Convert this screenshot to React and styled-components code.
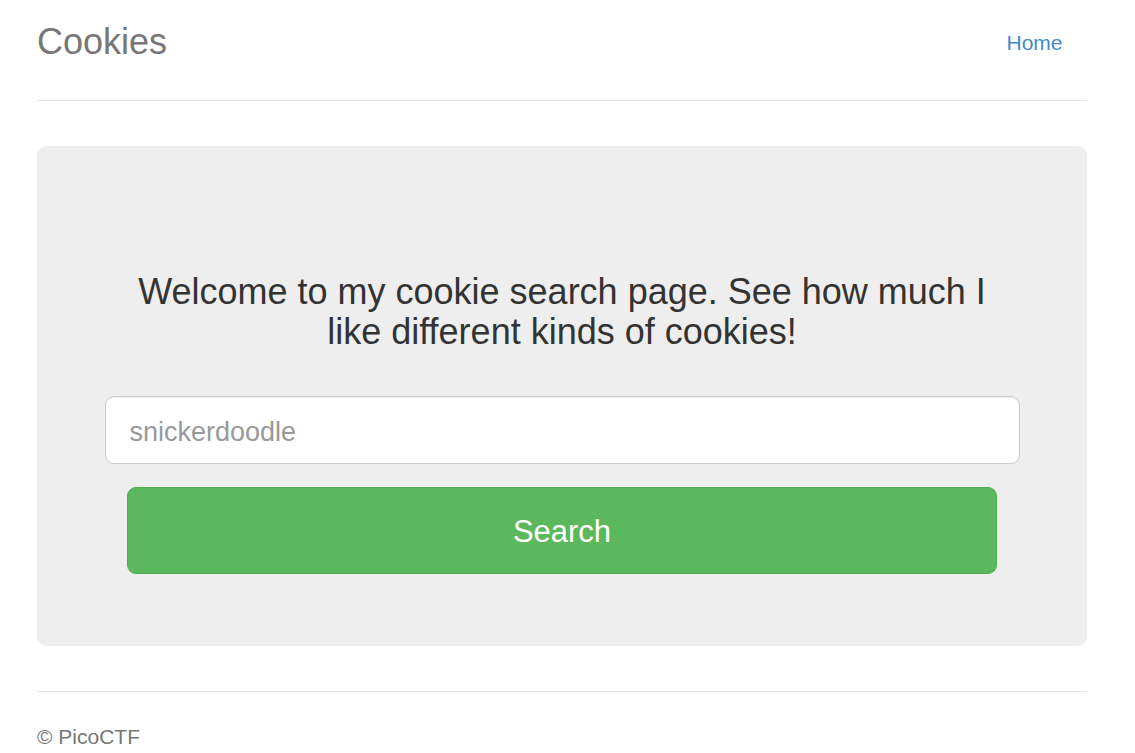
import React from "react";
import styled, { createGlobalStyle } from "styled-components";

const GlobalStyle = createGlobalStyle`
  html, body {
    margin: 0;
    padding: 0;
    background: #ffffff;
  }
  body {
    font-family: "Liberation Sans", Arial, Helvetica, sans-serif;
    font-size: 21px;
    line-height: 30px;
    color: #333333;
  }
  * { box-sizing: border-box; }
`;

const Container = styled.div`
  width: 1050px;
  margin-left: 37px;
`;

const Header = styled.header`
  display: flex;
  justify-content: space-between;
  align-items: flex-start;
  padding-top: 10px;
  padding-bottom: 28px;
  border-bottom: 1px solid #e5e5e5;
  margin-bottom: 45px;
`;

const Brand = styled.h3`
  margin: 0;
  padding-top: 2px;
  font-size: 36px;
  line-height: 60px;
  font-weight: 400;
  color: #777777;
`;

const Nav = styled.ul`
  list-style: none;
  margin: 0;
  padding: 0;
  display: flex;
`;

const NavLink = styled.a`
  display: block;
  padding: 18px 24.5px 12px 20.5px;
  font-size: 21px;
  line-height: 30px;
  color: #428bca;
  text-decoration: none;
`;

const Jumbotron = styled.section`
  background: #eeeeee;
  border-radius: 9px;
  padding: 72px 90px;
  text-align: center;
  margin-bottom: 45px;
`;

const Lead = styled.h3`
  margin: 54px 0 45px;
  font-size: 36px;
  line-height: 1.1;
  font-weight: 400;
  color: #333333;
`;

const Form = styled.form`
  display: flex;
  flex-direction: column;
  gap: 23px;
`;

const Row = styled.div`
  margin: 0 -22.5px;
`;

const Input = styled.input`
  display: block;
  width: 100%;
  height: 68px;
  padding: 4px 24px 0;
  font-family: inherit;
  font-size: 27px;
  color: #555555;
  background: #ffffff;
  border: 1px solid #cccccc;
  border-radius: 9px;
  box-shadow: inset 0 1px 1px rgba(0, 0, 0, 0.075);
  outline: none;
  &::placeholder {
    color: #999999;
  }
`;

const Button = styled.button`
  display: block;
  width: 100%;
  height: 87px;
  padding: 2px 0 0;
  font-family: inherit;
  font-size: 31px;
  color: #ffffff;
  background: #5cb85c;
  border: 1px solid #4cae4c;
  border-radius: 9px;
  cursor: pointer;
`;

const Footer = styled.footer`
  border-top: 1px solid #e5e5e5;
  padding-top: 29.5px;
  color: #777777;
  font-size: 21px;
  line-height: 30px;
`;

const FooterText = styled.p`
  margin: 0;
`;

export default function App() {
  return (
    <>
      <GlobalStyle />
      <Container>
        <Header>
          <Brand>Cookies</Brand>
          <Nav>
            <li>
              <NavLink href="#">Home</NavLink>
            </li>
          </Nav>
        </Header>
        <Jumbotron>
          <Lead>
            Welcome to my cookie search page. See how much I like different
            kinds of cookies!
          </Lead>
          <Form onSubmit={(e) => e.preventDefault()}>
            <Row>
              <Input type="text" name="name" placeholder="snickerdoodle" />
            </Row>
            <Button type="submit">Search</Button>
          </Form>
        </Jumbotron>
        <Footer>
          <FooterText>© PicoCTF</FooterText>
        </Footer>
      </Container>
    </>
  );
}
